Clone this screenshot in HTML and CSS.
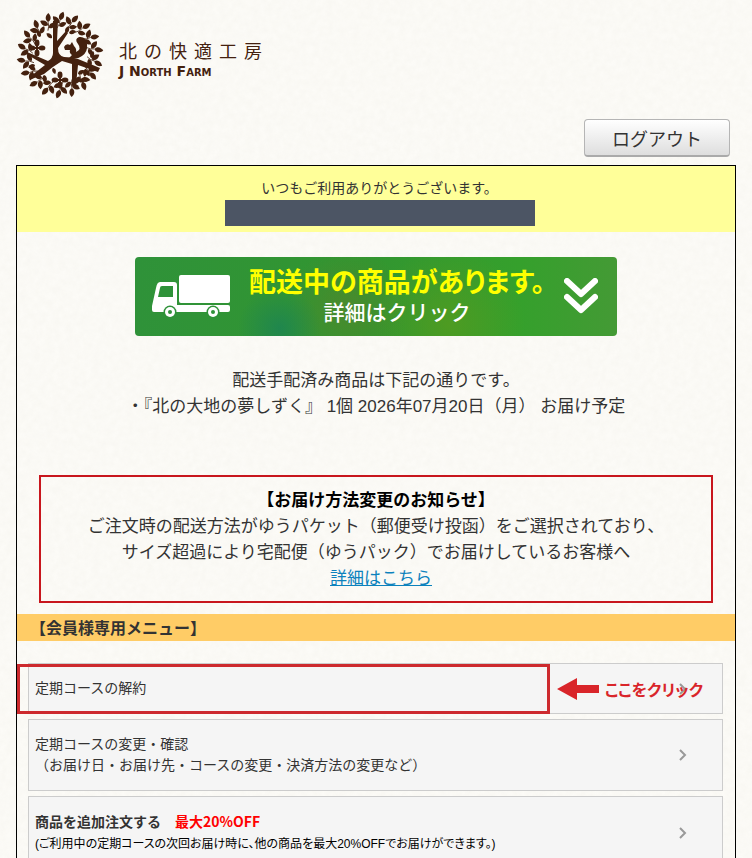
FILE: index.html
```
<!DOCTYPE html>
<html lang="ja">

<head>
    <meta charset="UTF-8">
    <meta name="viewport" content="width=device-width, initial-scale=1.0">
    <title>北の快適工房 マイページ</title>
    <link rel="stylesheet" href="styles.css">
</head>

<body>
    <header class="header">
        <a href="#" class="logo">
            <svg class="logo-mark" viewBox="0 0 88 88" aria-hidden="true">
                <defs>
                    <path id="leaf" d="M0 0C-3.4-2-3.2-6 0-9C3.2-6 3.4-2 0 0Z" />
                    <g id="sprig">
                        <path d="M44 9Q44 13 41 17" fill="none" stroke="#44210f" stroke-width=".8" />
                        <use href="#leaf" transform="translate(44 9) rotate(22)" />
                        <use href="#leaf" transform="translate(43 12) rotate(-42)" />
                        <use href="#leaf" transform="translate(43 15) rotate(66) scale(.9)" />
                    </g>
                    <g id="flower">
                        <ellipse cy="-5" rx="2.5" ry="3.4" />
                        <ellipse cy="5" rx="2.5" ry="3.4" />
                        <ellipse cx="-5" rx="3.4" ry="2.5" />
                        <ellipse cx="5" rx="3.4" ry="2.5" />
                        <path d="M-5-1H5V1H-5ZM-1-5H1V5H-1Z" />
                    </g>
                </defs>
                <g fill="#44210f">
                    <use href="#sprig" />
                    <use href="#sprig" transform="rotate(20 44 44)" />
                    <use href="#sprig" transform="rotate(40 44 44)" />
                    <use href="#sprig" transform="rotate(60 44 44)" />
                    <use href="#sprig" transform="rotate(80 44 44)" />
                    <use href="#sprig" transform="rotate(100 44 44)" />
                    <use href="#sprig" transform="rotate(120 44 44)" />
                    <use href="#sprig" transform="rotate(140 44 44)" />
                    <use href="#sprig" transform="rotate(160 44 44)" />
                    <use href="#sprig" transform="rotate(180 44 44)" />
                    <use href="#sprig" transform="rotate(200 44 44)" />
                    <use href="#sprig" transform="rotate(220 44 44)" />
                    <use href="#sprig" transform="rotate(240 44 44)" />
                    <use href="#sprig" transform="rotate(260 44 44)" />
                    <use href="#sprig" transform="rotate(280 44 44)" />
                    <use href="#sprig" transform="rotate(300 44 44)" />
                    <use href="#sprig" transform="rotate(320 44 44)" />
                    <use href="#sprig" transform="rotate(340 44 44)" />
                    <!-- 内側の葉 -->
                    <use href="#leaf" transform="translate(36 27) rotate(-50) scale(.8)" />
                    <use href="#leaf" transform="translate(24 26) rotate(-20) scale(.8)" />
                    <use href="#leaf" transform="translate(50 22) rotate(20) scale(.8)" />
                    <use href="#leaf" transform="translate(53 22) rotate(75) scale(.8)" />
                    <use href="#leaf" transform="translate(75 47) rotate(20) scale(.8)" />
                    <use href="#leaf" transform="translate(62 63) rotate(60) scale(.8)" />
                    <use href="#leaf" transform="translate(62 69) rotate(100) scale(.8)" />
                    <use href="#leaf" transform="translate(70 59) rotate(150) scale(.8)" />
                    <use href="#leaf" transform="translate(37 57) rotate(160) scale(.7)" />
                    <use href="#leaf" transform="translate(28 64) rotate(170) scale(.9)" />
                    <use href="#leaf" transform="translate(19 54) rotate(-110) scale(.8)" />
                    <!-- 幹と枝 -->
                    <path d="M37 10L42 10L41 30L50 20L52 22L42 37Q42 45 48 46Q56 46 62 48L84 57L82 61L62 54L60 74L56 74L56 53L46 50Q36 56 28 63L16 68L15 65L29 54L10 43L11 41L32 50Q37 47 37 42Z" />
                    <use href="#flower" transform="translate(21 37)" />
                    <use href="#flower" transform="translate(44 69)" />
                    <!-- リス -->
                    <path d="M48 36Q50 32 54 34L56 31L58 35Q61 38 60 41Q66 38 62 33Q58 28 63 26Q70 25 71 33Q72 41 66 45Q61 49 53 47L56 44Q53 42 54 39L49 39Z" />
                </g>
            </svg>
            <span class="logo-text">
                <span class="logo-ja">北の快適工房</span>
                <span class="logo-en">J North Farm</span>
            </span>
        </a>
        <button type="button" class="logout-btn">ログアウト</button>
    </header>

    <main class="container">
        <div class="welcome">
            <p>いつもご利用ありがとうございます。</p>
            <div class="member-name"></div>
        </div>

        <a href="#" class="banner">
            <svg class="banner-truck" viewBox="0 0 78 43" aria-hidden="true">
                <rect x="27" y="0" width="51" height="28" rx="2" fill="#fff" />
                <path d="M8 7H22Q25 7 25 10V30H76Q78 30 78 32V35Q78 37 76 37H2Q0 37 0 35V31L4 13Q5 7 8 7Z" fill="#fff" />
                <path d="M10 11H21V22H6L8 13Q8 11 10 11Z" fill="#2f9239" />
                <circle cx="18" cy="37" r="6.5" fill="#2f9239" />
                <circle cx="18" cy="37" r="5" fill="#fff" />
                <circle cx="18" cy="37" r="2" fill="#2f9239" />
                <circle cx="61" cy="37" r="6.5" fill="#2f9239" />
                <circle cx="61" cy="37" r="5" fill="#fff" />
                <circle cx="61" cy="37" r="2" fill="#2f9239" />
            </svg>
            <span class="banner-text">
                <span class="banner-title">配送中の商品があります。</span>
                <span class="banner-sub">詳細はクリック</span>
            </span>
            <svg class="banner-arrow" viewBox="0 0 34 37" aria-hidden="true">
                <path d="M3 3L17 16L31 3M3 19L17 32L31 19" fill="none" stroke="#fff" stroke-width="6" stroke-linecap="round" stroke-linejoin="round" />
            </svg>
        </a>

        <div class="shipping">
            <p>配送手配済み商品は下記の通りです。</p>
            <p>・『北の大地の夢しずく』 1個 2026年07月20日（月） お届け予定</p>
        </div>

        <div class="notice">
            <p class="notice-title">【お届け方法変更のお知らせ】</p>
            <p>ご注文時の配送方法がゆうパケット（郵便受け投函）をご選択されており、</p>
            <p>サイズ超過により宅配便（ゆうパック）でお届けしているお客様へ</p>
            <p class="notice-link"><a href="#">詳細はこちら</a></p>
        </div>

        <h2 class="menu-title">【会員様専用メニュー】</h2>

        <ul class="menu-list">
            <li class="menu-item">
                <a href="#" class="menu-link">
                    <span>定期コースの解約</span>
                    <svg class="chevron" viewBox="0 0 8 12" aria-hidden="true"><path d="M1 1L6 6L1 11" /></svg>
                </a>
                <div class="click-frame"></div>
                <div class="click-guide">
                    <svg class="click-arrow" viewBox="0 0 42 22" aria-hidden="true">
                        <path d="M0 11L20 0V7H42V15H20V22Z" fill="#d9252a" />
                    </svg>
                    <span>ここをクリック</span>
                </div>
            </li>
            <li class="menu-item">
                <a href="#" class="menu-link">
                    <span>定期コースの変更・確認<br>（お届け日・お届け先・コースの変更・決済方法の変更など）</span>
                    <svg class="chevron" viewBox="0 0 8 12" aria-hidden="true"><path d="M1 1L6 6L1 11" /></svg>
                </a>
            </li>
            <li class="menu-item">
                <a href="#" class="menu-link">
                    <span><strong>商品を追加注文する　<em class="off">最大20%OFF</em></strong><br><small class="note">(ご利用中の定期コースの次回お届け時に、他の商品を最大20%OFFでお届けができます。)</small></span>
                    <svg class="chevron" viewBox="0 0 8 12" aria-hidden="true"><path d="M1 1L6 6L1 11" /></svg>
                </a>
            </li>
        </ul>
    </main>
</body>

</html>
```
FILE: styles.css
```
* {
    box-sizing: border-box;
    margin: 0;
    padding: 0;
}

body {
    font-family: "Liberation Sans", "Noto Sans CJK JP", sans-serif;
    font-size: 14px;
    color: #333;
    background-color: #fcfbf7;
    /* 和紙風の背景 */
    background-image: url("data:image/svg+xml,%3Csvg xmlns='http://www.w3.org/2000/svg' width='200' height='200'%3E%3Cfilter id='n'%3E%3CfeTurbulence type='fractalNoise' baseFrequency='.15' numOctaves='3' stitchTiles='stitch'/%3E%3CfeColorMatrix values='0 0 0 0 .6 0 0 0 0 .58 0 0 0 0 .5 .1 0 0 0 -.02'/%3E%3C/filter%3E%3Crect width='200' height='200' filter='url(%23n)'/%3E%3C/svg%3E");
    padding: 11px 16px 0;
}

/* Header */
.header {
    display: flex;
    flex-direction: column;
}

.logo {
    display: flex;
    align-items: center;
    gap: 15px;
    color: #44210f;
    text-decoration: none;
}

.logo-mark {
    width: 88px;
    height: 88px;
}

.logo-text {
    display: flex;
    flex-direction: column;
    padding-top: 8px;
}

.logo-ja {
    font-size: 18px;
    line-height: 24px;
    letter-spacing: 7px;
}

.logo-en {
    font-family: "DejaVu Sans", sans-serif;
    font-size: 14px;
    font-weight: bold;
    font-variant: small-caps;
    line-height: 14px;
}

.logout-btn {
    align-self: flex-end;
    width: 146px;
    height: 38px;
    margin: 20px 6px 8px 0;
    font-family: inherit;
    font-size: 18px;
    color: #333;
    background: linear-gradient(#fff, #dedede);
    border: 1px solid #b5b5b5;
    border-bottom: 2px solid #aaa;
    border-radius: 4px;
    cursor: pointer;
}

/* Container */
.container {
    border: 1px solid #000;
    border-bottom: none;
}

.welcome {
    display: flex;
    flex-direction: column;
    align-items: center;
    padding: 10px 0 6px 7px;
    background-color: #ff9;
    line-height: 24px;
}

.member-name {
    width: 310px;
    max-width: 100%;
    height: 26px;
    background-color: #4c5564;
}

/* Banner */
.banner {
    display: flex;
    align-items: center;
    justify-content: space-between;
    width: 67%;
    height: 79px;
    margin: 25px auto 32px;
    padding: 0 19px 0 17px;
    border-radius: 4px;
    text-decoration: none;
    background:
        radial-gradient(circle at 30% 90%, rgba(20, 125, 95, 0.6), transparent 12%),
        radial-gradient(circle at 44% 65%, rgba(90, 130, 40, 0.6), transparent 22%),
        radial-gradient(circle at 65% 85%, rgba(95, 155, 25, 0.6), transparent 24%),
        linear-gradient(90deg, #2f9239, #329630 50%, #35a02c 80%, #449a35);
}

.banner-truck {
    width: 78px;
    height: 43px;
}

.banner-text {
    display: flex;
    flex-direction: column;
    align-items: center;
    white-space: nowrap;
}

.banner-title {
    font-size: 27px;
    font-weight: bold;
    font-feature-settings: "palt";
    line-height: 32px;
    color: #ff0;
}

.banner-sub {
    font-size: 21px;
    font-weight: 500;
    line-height: 28px;
    color: #fff;
}

.banner-arrow {
    width: 34px;
    height: 37px;
}

.shipping {
    font-size: 17px;
    line-height: 26px;
    text-align: center;
    margin-bottom: 55px;
}

/* Notice */
.notice {
    margin: 0 22px 11px;
    padding: 11px 0 9px;
    border: 2px solid #c8161d;
    font-size: 17px;
    line-height: 26px;
    text-align: center;
}

.notice-title {
    font-weight: bold;
    color: #000;
}

.notice-link {
    padding-left: 10px;
}

.notice a {
    color: #0c82bd;
}

/* Menu */
.menu-title {
    padding: 2px 0 0 13px;
    font-size: 16px;
    line-height: 25px;
    background-color: #fc6;
}

.menu-list {
    display: flex;
    flex-direction: column;
    gap: 5px;
    padding: 22px 12px 0 11px;
    list-style-type: none;
}

.menu-item {
    position: relative;
}

.menu-link {
    display: flex;
    align-items: center;
    justify-content: space-between;
    padding: 14px 35px 14px 6px;
    border: 1px solid #ccc;
    background-color: #f5f5f5;
    color: #333;
    line-height: 21px;
    text-decoration: none;
}

.chevron {
    width: 8px;
    height: 12px;
    fill: none;
    stroke: #999;
    stroke-width: 2;
}

.off {
    color: #f00;
    font-family: "Noto Sans CJK JP", sans-serif;
    font-style: normal;
}

.note {
    font-size: 12px;
    font-feature-settings: "palt";
    color: #000;
}

.click-frame {
    position: absolute;
    top: 1px;
    right: 173px;
    bottom: 0;
    left: -11px;
    border: 3px solid #cd2a2e;
}

.click-guide {
    position: absolute;
    top: 0;
    right: 20px;
    bottom: 0;
    display: flex;
    align-items: center;
    gap: 6px;
    font-size: 16px;
    font-weight: bold;
    font-feature-settings: "palt";
    color: #d9252a;
}

.click-arrow {
    width: 42px;
    height: 22px;
}
```
